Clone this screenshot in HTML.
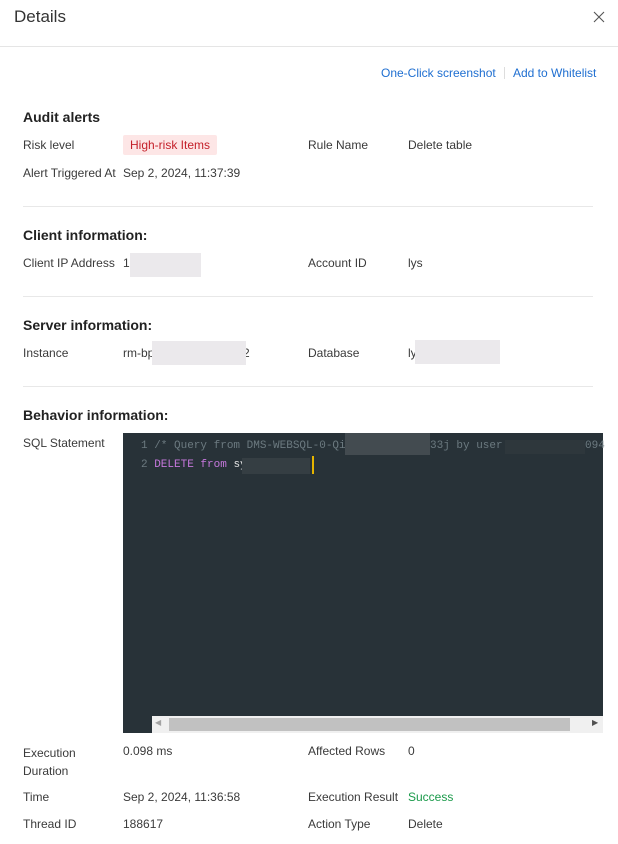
<!DOCTYPE html>
<html><head><meta charset="utf-8"><style>
body{margin:0;width:618px;height:844px;background:#fff;font-family:"Liberation Sans",sans-serif;color:#3a3a3a;position:relative;overflow:hidden;font-size:12px}
.a{position:absolute;white-space:nowrap}
.h{font-size:14px;font-weight:bold;color:#222}
.hr{position:absolute;left:23px;width:570px;height:1px;background:#e8e8e8}
.blur{position:absolute;background:#ebe9ec}
.code{font-family:"Liberation Mono",monospace;font-size:11px}
</style></head><body>
<div class="a" style="left:14px;top:7px;font-size:17px;color:#333">Details</div>
<svg style="position:absolute;left:593px;top:11px" width="12" height="12" viewBox="0 0 12 12"><path d="M1 1L11 11M11 1L1 11" stroke="#555" stroke-width="1.1" fill="none"/></svg>
<div style="position:absolute;left:0;top:46px;width:618px;height:1px;background:#e5e5e5"></div>
<div class="a" style="left:381px;top:66px;color:#1f6fd1;font-size:12px">One-Click screenshot</div>
<div style="position:absolute;left:504px;top:67px;width:1px;height:12px;background:#ddd"></div>
<div class="a" style="left:513px;top:66px;color:#1f6fd1;font-size:12px">Add to Whitelist</div>

<div class="a h" style="left:23px;top:109px">Audit alerts</div>
<div class="a" style="left:23px;top:138px">Risk level</div>
<div class="a" style="left:123px;top:135px;background:#fde6e6;color:#c4202a;padding:3px 7px;border-radius:2px">High-risk Items</div>
<div class="a" style="left:308px;top:138px">Rule Name</div>
<div class="a" style="left:408px;top:138px">Delete table</div>
<div class="a" style="left:23px;top:166px">Alert Triggered At</div>
<div class="a" style="left:123px;top:166px">Sep 2, 2024, 11:37:39</div>
<div class="hr" style="top:206px"></div>

<div class="a h" style="left:23px;top:227px">Client information:</div>
<div class="a" style="left:23px;top:256px">Client IP Address</div>
<div class="a" style="left:123px;top:256px">1<span style="color:#bbb">0</span></div>
<div class="blur" style="left:130px;top:253px;width:71px;height:24px"></div>
<div class="a" style="left:308px;top:256px">Account ID</div>
<div class="a" style="left:408px;top:256px">lys</div>
<div class="hr" style="top:296px"></div>

<div class="a h" style="left:23px;top:317px">Server information:</div>
<div class="a" style="left:23px;top:346px">Instance</div>
<div class="a" style="left:123px;top:346px">rm-bp</div>
<div class="a" style="left:243px;top:346px">2</div>
<div class="blur" style="left:152px;top:341px;width:94px;height:24px"></div>
<div class="a" style="left:308px;top:346px">Database</div>
<div class="a" style="left:408px;top:346px">ly</div>
<div class="blur" style="left:415px;top:340px;width:85px;height:24px"></div>
<div class="hr" style="top:386px"></div>

<div class="a h" style="left:23px;top:407px">Behavior information:</div>
<div class="a" style="left:23px;top:436px">SQL Statement</div>
<div style="position:absolute;left:123px;top:433px;width:480px;height:300px;background:#283238"></div>
<div class="a code" style="left:141px;top:440px;color:#6c7a80">1 /* Query from DMS-WEBSQL-0-Qid_7</div>
<div style="position:absolute;left:345px;top:433px;width:85px;height:22px;background:#434b50"></div>
<div class="a code" style="left:430px;top:440px;color:#6c7a80">33j by user </div>
<div style="position:absolute;left:505px;top:440px;width:80px;height:14px;background:#2e373c"></div>
<div class="a code" style="left:585px;top:440px;color:#6c7a80">094</div>
<div class="a code" style="left:141px;top:459px;color:#6c7a80">2 <span style="color:#c678dd">DELETE</span> <span style="color:#c678dd">from</span> <span style="color:#e6e6e6">sy</span></div>
<div style="position:absolute;left:242px;top:458px;width:68px;height:16px;background:#353e43"></div>
<div style="position:absolute;left:312px;top:456px;width:2px;height:18px;background:#e5b400"></div>
<div style="position:absolute;left:152px;top:716px;width:451px;height:17px;background:#f0f0f0"></div>
<div style="position:absolute;left:169px;top:718px;width:401px;height:13px;background:#c1c1c1"></div>
<div class="a" style="left:155px;top:718px;font-size:8px;color:#a3a3a3">◀</div>
<div class="a" style="left:592px;top:718px;font-size:8px;color:#505050">▶</div>

<div class="a" style="left:23px;top:744px;line-height:18px">Execution<br>Duration</div>
<div class="a" style="left:123px;top:744px">0.098 ms</div>
<div class="a" style="left:308px;top:744px">Affected Rows</div>
<div class="a" style="left:408px;top:744px">0</div>
<div class="a" style="left:23px;top:790px">Time</div>
<div class="a" style="left:123px;top:790px">Sep 2, 2024, 11:36:58</div>
<div class="a" style="left:308px;top:790px">Execution Result</div>
<div class="a" style="left:408px;top:790px;color:#1a9a4a">Success</div>
<div class="a" style="left:23px;top:817px">Thread ID</div>
<div class="a" style="left:123px;top:817px">188617</div>
<div class="a" style="left:308px;top:817px">Action Type</div>
<div class="a" style="left:408px;top:817px">Delete</div>
</body></html>
